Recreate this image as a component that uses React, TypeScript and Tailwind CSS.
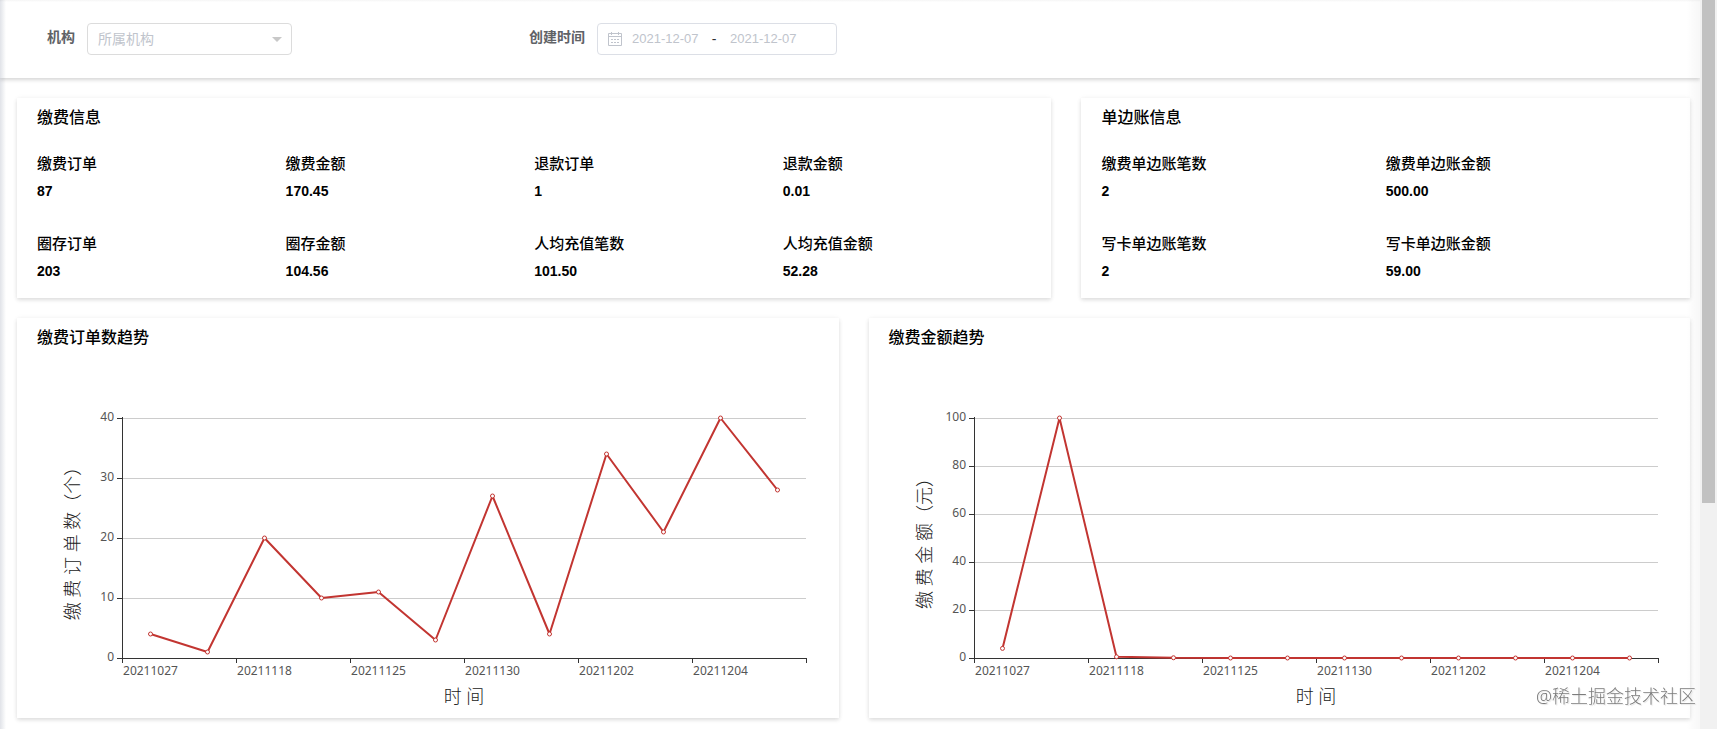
import { useEffect, useLayoutEffect, useRef, useState } from "react";

type Stat = { label: string; value: string };

const PAY_STATS: Stat[] = [
  { label: "缴费订单", value: "87" },
  { label: "缴费金额", value: "170.45" },
  { label: "退款订单", value: "1" },
  { label: "退款金额", value: "0.01" },
  { label: "圈存订单", value: "203" },
  { label: "圈存金额", value: "104.56" },
  { label: "人均充值笔数", value: "101.50" },
  { label: "人均充值金额", value: "52.28" },
];

const UNILATERAL_STATS: Stat[] = [
  { label: "缴费单边账笔数", value: "2" },
  { label: "缴费单边账金额", value: "500.00" },
  { label: "写卡单边账笔数", value: "2" },
  { label: "写卡单边账金额", value: "59.00" },
];

// One label per two points
const DATES = ["20211027", "20211118", "20211125", "20211130", "20211202", "20211204"];
const ORDER_COUNTS = [4, 1, 20, 10, 11, 3, 27, 4, 34, 21, 40, 28];
const PAY_AMOUNTS = [4, 100, 0.5, 0.1, 0, 0, 0, 0, 0, 0, 0, 0];

const CHART_HEIGHT = 360;
const GRID = { left: 105, right: 33, top: 60, bottom: 60 };

function CalendarIcon() {
  return (
    <svg className="size-[14px] shrink-0 text-[#c0c4cc]" viewBox="0 0 14 14" fill="none" stroke="currentColor" aria-hidden="true">
      <path d="M0.5 1.5h13v12h-13zM0.5 4.5h13M3.5 0v3M10.5 0v3" />
      <path d="M3 7.5h2M6 7.5h2M9 7.5h2M3 10.5h2M6 10.5h2M9 10.5h2" />
    </svg>
  );
}

function FilterBar() {
  return (
    <form className="flex items-start bg-white px-[47px] pt-[23px] pb-[23px] shadow-[0_2px_4px_rgba(0,0,0,0.14),0_0_6px_rgba(0,0,0,0.05)]">
      <div className="flex w-[482px] shrink-0">
        <label htmlFor="org" className="mr-3 text-sm leading-[28px] font-bold text-[#606266]">
          机构
        </label>
        <div className="relative">
          <select
            id="org"
            defaultValue=""
            className="h-8 w-[205px] appearance-none rounded border border-[#dcdcdc] bg-white px-[10px] text-sm text-[#c0c4cc] outline-none"
          >
            <option value="">所属机构</option>
          </select>
          <svg className="pointer-events-none absolute top-[14px] right-[10px] h-[5px] w-[10px]" viewBox="0 0 10 5" aria-hidden="true">
            <path d="M0 0h10L5 5z" fill="#c8c8c8" />
          </svg>
        </div>
      </div>
      <div className="flex shrink-0">
        <label htmlFor="start" className="mr-3 text-sm leading-[28px] font-bold text-[#606266]">
          创建时间
        </label>
        <div className="flex h-8 w-[240px] items-center rounded border border-[#dcdfe6] bg-white px-[10px]">
          <CalendarIcon />
          <input
            id="start"
            placeholder="2021-12-07"
            className="ml-[10px] w-[70px] text-[13px] outline-none placeholder:text-[#c0c4cc]"
          />
          <span className="w-6 text-center text-sm text-[#303133]">-</span>
          <input
            aria-label="结束时间"
            placeholder="2021-12-07"
            className="ml-1 w-[70px] text-[13px] outline-none placeholder:text-[#c0c4cc]"
          />
        </div>
      </div>
    </form>
  );
}

function Card({ title, className, children }: { title: string; className: string; children: React.ReactNode }) {
  return (
    <section className={`bg-white shadow-[0_2px_4px_rgba(0,0,0,0.12),0_0_6px_rgba(0,0,0,0.04)] ${className}`}>
      <h2 className="px-5 text-base leading-[40px] font-medium text-black">{title}</h2>
      {children}
    </section>
  );
}

function StatGrid({ stats, columns }: { stats: Stat[]; columns: string }) {
  return (
    <dl className={`grid px-5 ${columns}`}>
      {stats.map((stat) => (
        <div key={stat.label} className="h-20 pt-3 text-black">
          <dt className="text-[15px] leading-[28px] font-medium">{stat.label}</dt>
          <dd className="text-sm leading-[26px] font-bold">{stat.value}</dd>
        </div>
      ))}
    </dl>
  );
}

function LineChart({ values, max, step, yName }: { values: number[]; max: number; step: number; yName: string }) {
  const boxRef = useRef<HTMLDivElement>(null);
  const [width, setWidth] = useState(820);

  useLayoutEffect(() => {
    if (boxRef.current) setWidth(Math.round(boxRef.current.clientWidth));
  }, []);

  useEffect(() => {
    const box = boxRef.current;
    if (!box) return;
    const observer = new ResizeObserver(() => setWidth(Math.round(box.clientWidth)));
    observer.observe(box);
    return () => observer.disconnect();
  }, []);

  const right = width - GRID.right;
  const bottom = CHART_HEIGHT - GRID.bottom;
  const plotWidth = right - GRID.left;
  const plotHeight = bottom - GRID.top;
  const band = plotWidth / values.length;

  const x = (i: number) => GRID.left + band * (i + 0.5);
  const y = (v: number) => bottom - (v / max) * plotHeight;
  const yTicks = Array.from({ length: max / step + 1 }, (_, i) => i * step);
  const midY = GRID.top + plotHeight / 2;

  return (
    <div ref={boxRef} className="w-full">
      <svg
        width={width}
        height={CHART_HEIGHT}
        className="block font-['Noto_Sans','Noto_Sans_CJK_SC',sans-serif]"
        role="img"
        aria-label={yName}
      >
        <g shapeRendering="crispEdges">
          {yTicks.map((t) => (
            <g key={t}>
              {t > 0 && <line x1={GRID.left} x2={right} y1={y(t) + 0.5} y2={y(t) + 0.5} stroke="#ccc" />}
              <line x1={GRID.left - 5} x2={GRID.left} y1={y(t) + 0.5} y2={y(t) + 0.5} stroke="#333" />
            </g>
          ))}
          <line x1={GRID.left + 0.5} x2={GRID.left + 0.5} y1={GRID.top - 1} y2={bottom + 1} stroke="#333" />
          <line x1={GRID.left} x2={right + 1} y1={bottom + 0.5} y2={bottom + 0.5} stroke="#333" />
          {[...DATES, "end"].map((d, i) => {
            const tx = Math.round(GRID.left + band * 2 * i) + 0.5;
            return <line key={d} x1={tx} x2={tx} y1={bottom} y2={bottom + 5} stroke="#333" />;
          })}
        </g>

        <g fontSize="12" fill="#555">
          {yTicks.map((t) => (
            <text key={t} x={GRID.left - 8} y={y(t) + 3} textAnchor="end">
              {t}
            </text>
          ))}
          {DATES.map((d, i) => (
            <text key={d} x={x(i * 2)} y={bottom + 17} textAnchor="middle">
              {d}
            </text>
          ))}
        </g>

        <g fontSize="18" fontWeight="300" fill="#222" textAnchor="middle">
          <text x={GRID.left + plotWidth / 2} y={bottom + 45}>
            时 间
          </text>
          <text transform={`translate(62 ${midY + 1}) rotate(-90)`}>{yName}</text>
        </g>

        <polyline
          points={values.map((v, i) => `${x(i)},${y(v)}`).join(" ")}
          fill="none"
          stroke="#c23531"
          strokeWidth="2"
          strokeLinejoin="bevel"
        />
        {values.map((v, i) => (
          <circle key={i} cx={x(i)} cy={y(v)} r="2" fill="#fff" stroke="#c23531" />
        ))}
      </svg>
    </div>
  );
}

export default function App() {
  return (
    <div className="flex h-screen overflow-hidden bg-white font-['Liberation_Sans','Noto_Sans_CJK_SC',sans-serif]">
      <div className="relative min-w-0 flex-1 overflow-hidden">
        <FilterBar />
        <main className="grid grid-cols-24 gap-x-[30px] gap-y-5 pt-5 pr-[10px] pb-5 pl-[17px]">
          <Card title="缴费信息" className="col-span-15">
            <StatGrid stats={PAY_STATS} columns="grid-cols-4" />
          </Card>
          <Card title="单边账信息" className="col-span-9">
            <StatGrid stats={UNILATERAL_STATS} columns="grid-cols-2" />
          </Card>
          <Card title="缴费订单数趋势" className="col-span-12">
            <LineChart values={ORDER_COUNTS} max={40} step={10} yName="缴 费 订 单 数（个）" />
          </Card>
          <Card title="缴费金额趋势" className="col-span-12">
            <LineChart values={PAY_AMOUNTS} max={100} step={20} yName="缴 费 金 额（元）" />
          </Card>
        </main>

        {/* Soft shading along the edges of the scroll area */}
        <div className="pointer-events-none absolute inset-y-0 left-0 w-[6px] bg-linear-to-r from-[#001540]/12 to-transparent" />
        <div className="pointer-events-none absolute inset-y-0 right-0 w-[14px] bg-linear-to-l from-black/3 to-transparent" />
        <div className="pointer-events-none absolute inset-x-0 top-0 h-[2px] bg-linear-to-b from-black/4 to-transparent" />
      </div>

      {/* Scrollbar */}
      <div className="w-[17px] shrink-0 bg-[#f1f1f1] px-[2px]">
        <div className="h-[69%] bg-[#c1c1c1]" />
      </div>

      <div className="pointer-events-none fixed right-[21px] bottom-[19px] font-['Noto_Sans','Noto_Sans_CJK_SC',sans-serif] text-lg font-light text-[#7c7c7c] [text-shadow:0_0_2px_#fff,1px_1px_1px_#ddd]">
        @稀土掘金技术社区
      </div>
    </div>
  );
}
